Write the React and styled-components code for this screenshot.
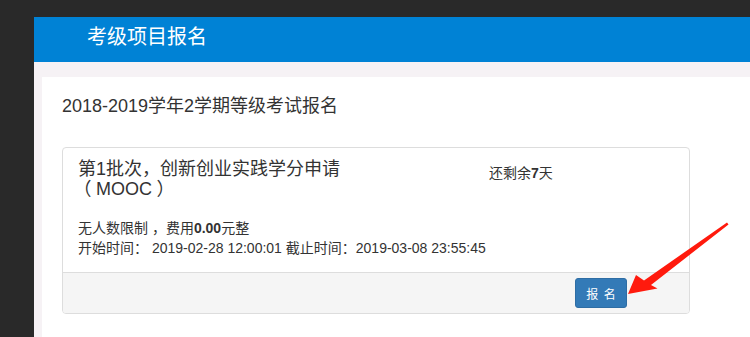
import React from "react";
import styled, { createGlobalStyle } from "styled-components";

const Global = createGlobalStyle`
  html, body { margin: 0; padding: 0; background: #292929; }
  body {
    font-family: "Liberation Sans", "Noto Sans CJK SC", sans-serif;
    color: #333;
    overflow: hidden;
  }
  * { box-sizing: border-box; }
`;

const Stage = styled.div`
  position: relative;
  width: 750px;
  height: 337px;
  padding: 17px 0 0 34px;
`;

const Window = styled.div`
  display: flex;
  flex-direction: column;
  height: 320px;
  background: #f6f2f5;
`;

const Header = styled.header`
  height: 45px;
  flex: none;
  background: #0082d5;
  color: #fff;
  font-size: 20px;
  line-height: 1;
  display: flex;
  align-items: center;
  padding: 0 0 6px 53px;
`;

const Main = styled.main`
  flex: 1;
  display: flex;
  padding: 15px 0 0 8px;
`;

const Panel = styled.section`
  flex: 1;
  background: #fff;
  padding: 19px 20px 0;
`;

const PageTitle = styled.h1`
  margin: 0;
  font-size: 18px;
  font-weight: normal;
  line-height: 20px;
  color: #333;
`;

const Card = styled.div`
  width: 628px;
  margin-top: 31px;
  border: 1px solid #ddd;
  border-radius: 4px;
  overflow: hidden;
`;

const CardBody = styled.div`
  padding: 11px 15px 14px;
`;

const TopRow = styled.div`
  display: grid;
  grid-template-columns: 284px auto;
  column-gap: 127px;
  align-items: start;
`;

const CardTitle = styled.h4`
  margin: 0;
  font-size: 18px;
  font-weight: normal;
  line-height: 20px;
`;

const Group = styled.span`
  white-space: nowrap;
`;

const Paren = styled.span`
  display: inline-block;
  width: 18px;
  text-align: center;
  font-feature-settings: "halt";
  line-height: 20px;
  vertical-align: top;
`;

const Remain = styled.div`
  font-size: 14px;
  line-height: 20px;
  margin-top: 4px;
  white-space: nowrap;
  b { font-weight: bold; }
`;

const InfoList = styled.div`
  margin-top: 19px;
`;

const InfoLine = styled.p`
  margin: 0;
  font-size: 14px;
  line-height: 20px;
  white-space: nowrap;
  b { font-weight: bold; }
`;

const CardFooter = styled.div`
  display: flex;
  justify-content: flex-end;
  background: #f5f5f5;
  border-top: 1px solid #ddd;
  padding: 5px 62px 5px 15px;
`;

const Button = styled.button`
  width: 52px;
  height: 30px;
  border: 1px solid #2e6da4;
  border-radius: 3px;
  background: #337ab7;
  color: #fff;
  font-family: inherit;
  font-size: 12px;
  letter-spacing: 1px;
  padding: 0 0 0 1px;
  cursor: pointer;
`;

const Arrow = styled.svg`
  position: absolute;
  left: 0;
  top: 0;
  pointer-events: none;
`;

export default function App() {
  return (
    <>
      <Global />
      <Stage>
        <Window>
          <Header>考级项目报名</Header>
          <Main>
            <Panel>
              <PageTitle>2018-2019学年2学期等级考试报名</PageTitle>
              <Card>
                <CardBody>
                  <TopRow>
                    <CardTitle>
                      第1批次，创新创业实践学分申请
                      <Group>
                        <Paren>（</Paren>MOOC<Paren>）</Paren>
                      </Group>
                    </CardTitle>
                    <Remain>
                      还剩余<b>7</b>天
                    </Remain>
                  </TopRow>
                  <InfoList>
                    <InfoLine>
                      无人数限制 ，费用<b>0.00</b>元整
                    </InfoLine>
                    <InfoLine>
                      开始时间： 2019-02-28 12:00:01 截止时间：2019-03-08 23:55:45
                    </InfoLine>
                  </InfoList>
                </CardBody>
                <CardFooter>
                  <Button>报 名</Button>
                </CardFooter>
              </Card>
            </Panel>
          </Main>
        </Window>
        <Arrow width="750" height="337" viewBox="0 0 750 337">
          <polygon
            points="727,222.5 728.5,224.5 651,285 657.5,288.5 628,294 636,275 644,280.5"
            fill="#ff1a0d"
          />
        </Arrow>
      </Stage>
    </>
  );
}
